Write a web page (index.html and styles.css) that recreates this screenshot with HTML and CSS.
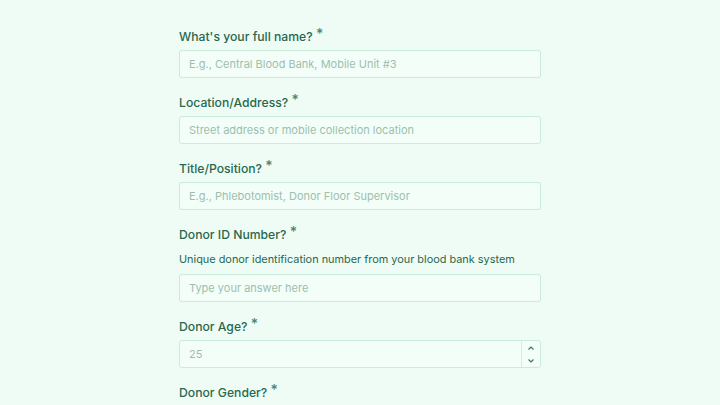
FILE: index.html
```html
<!DOCTYPE html>
<html lang="en">
<head>
<meta charset="utf-8">
<link rel="stylesheet" href="styles.css">
</head>
<body>
<form class="form">
  <div class="field">
    <label class="label">What's your full name? <span class="req">*</span></label>
    <input class="input" type="text" placeholder="E.g., Central Blood Bank, Mobile Unit #3">
  </div>
  <div class="field">
    <label class="label">Location/Address? <span class="req">*</span></label>
    <input class="input" type="text" placeholder="Street address or mobile collection location">
  </div>
  <div class="field">
    <label class="label">Title/Position? <span class="req">*</span></label>
    <input class="input" type="text" placeholder="E.g., Phlebotomist, Donor Floor Supervisor">
  </div>
  <div class="field">
    <label class="label">Donor ID Number? <span class="req">*</span></label>
    <p class="desc">Unique donor identification number from your blood bank system</p>
    <input class="input" type="text" placeholder="Type your answer here">
  </div>
  <div class="field">
    <label class="label">Donor Age? <span class="req">*</span></label>
    <div class="number">
      <input class="input num" type="text" placeholder="25">
      <div class="spin">
        <svg viewBox="0 0 10 8" width="10" height="8"><path d="M2.5 5.5 L5 3 L7.5 5.5" fill="none" stroke="#3a735e" stroke-width="1.1"/></svg>
        <svg viewBox="0 0 10 8" width="10" height="8"><path d="M2.5 2.5 L5 5 L7.5 2.5" fill="none" stroke="#3a735e" stroke-width="1.1"/></svg>
      </div>
    </div>
  </div>
  <div class="field">
    <label class="label">Donor Gender? <span class="req">*</span></label>
  </div>
</form>
</body>
</html>
```
FILE: styles.css
```css
html, body {
  margin: 0;
  padding: 0;
  background: #effcf5;
  font-family: Inter, "Noto Sans", sans-serif;
}
.form {
  width: 362px;
  margin: 0 auto;
  padding-top: 27px;
  display: flex;
  flex-direction: column;
  gap: 15px;
}
.field {
  display: flex;
  flex-direction: column;
}
.label {
  font-size: 12.2px;
  line-height: 20px;
  font-weight: 500;
  color: #28684f;
  margin-bottom: 3px;
}
.req {
  font-size: 14px;
  line-height: 0;
  color: #4a8670;
  position: relative;
  top: -2px;
}
.desc {
  margin: 1px 0 5px;
  font-size: 10.9px;
  line-height: 20px;
  color: #28684f;
}
.input {
  box-sizing: border-box;
  width: 100%;
  height: 28px;
  border: 1px solid #c9ebda;
  border-radius: 3px;
  background: #f3fef9;
  padding: 0 9px;
  font-family: Inter, "Noto Sans", sans-serif;
  font-size: 11px;
  color: #28684f;
  outline: none;
}
.input::placeholder {
  color: #9dbeae;
}
.number {
  position: relative;
}
.num {
  padding-right: 28px;
}
.spin {
  position: absolute;
  right: 1px;
  top: 1px;
  bottom: 1px;
  width: 18px;
  border-left: 1px solid #d3eee0;
  display: flex;
  flex-direction: column;
  align-items: center;
  justify-content: center;
  gap: 5px;
}
.spin svg { display: block; }
```
